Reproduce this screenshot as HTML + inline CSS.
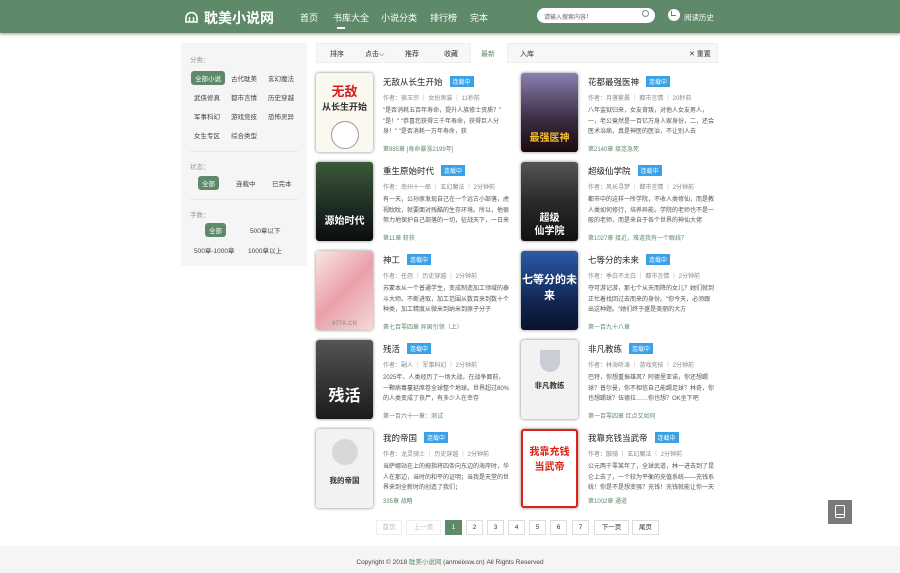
<!DOCTYPE html>
<html><head><meta charset="utf-8"><style>
*{margin:0;padding:0;box-sizing:border-box}
body{width:900px;height:573px;overflow:hidden;background:#fff;font-family:"Liberation Sans","Noto Sans CJK SC",sans-serif;font-size:7px;color:#333;position:relative}
.hd{position:absolute;left:0;top:0;width:900px;height:33px;background:#5e8a69;box-shadow:0 1px 3px rgba(0,0,0,.4)}
.logo{position:absolute;left:184px;top:8px;color:#fff;font-size:14px;font-weight:bold}
.nav{position:absolute;top:11px;color:#fff;font-size:9px}
.search{position:absolute;left:537px;top:8px;width:118px;height:15px;background:#fff;border-radius:8px;font-size:6px;color:#666;padding:4px 7px}
.side{position:absolute;left:181px;top:43px;width:126px;height:223px;background:#f5f5f5}
.side .l{position:absolute;font-size:6.5px;color:#444}
.side .g{position:absolute;color:#999;font-size:6.5px}
.on{background:#5e8a69;color:#fff!important;border-radius:3px;padding:2px 4px}
.hr{position:absolute;left:9px;width:108px;height:1px;background:#e6e6e6}
.tabs{position:absolute;left:316px;top:43px;width:402px;height:20px;background:#f7f7f7;border:1px solid #eee}
.tabs span{position:absolute;top:5px;font-size:7px;color:#333}
.cov{position:absolute;width:57px;height:79px;border-radius:3px;box-shadow:0 0 3px rgba(0,0,0,.5);overflow:hidden;font-weight:bold;text-align:center}
.t{position:absolute;font-size:8.5px;color:#222}
.b{display:inline-block;background:#3aa0e8;color:#fff;font-size:6px;padding:1px 3px;margin-left:7px;vertical-align:1px}
.m{position:absolute;font-size:6px;color:#888}
.d{position:absolute;font-size:6px;color:#555;line-height:10.5px;width:126px;height:31px;overflow:hidden}
.n{position:absolute;font-size:6px;color:#5e8a69}
.pg{position:absolute;top:520px;height:15px;border:1px solid #ddd;font-size:6.5px;text-align:center;line-height:13px;color:#333}
.ft{position:absolute;left:0;top:546px;width:900px;height:27px;background:#f5f5f5;text-align:center;font-size:6.5px;color:#444;padding-top:10px}
</style></head><body>
<div class="hd">
<svg style="position:absolute;left:184px;top:9px" width="15" height="15" viewBox="0 0 15 15"><path d="M2 9a5.5 5.5 0 0 1 11 0v4H2z" fill="none" stroke="#fff" stroke-width="1.6"/><path d="M5.5 13V8M9.5 13V8" stroke="#fff" stroke-width="1.4"/></svg>
<div class="logo" style="left:204px">耽美小说网</div>
<div class="nav" style="left:300px">首页</div>
<div class="nav" style="left:333px">书库大全</div>
<div style="position:absolute;left:337px;top:27px;width:8px;height:2px;background:#fff"></div>
<div class="nav" style="left:381px">小说分类</div>
<div class="nav" style="left:430px">排行榜</div>
<div class="nav" style="left:470px">完本</div>
<div class="search">请输入搜索内容！<span style="position:absolute;right:6px;top:2px;width:7px;height:7px;border:1px solid #888;border-radius:50%"></span></div>
<div style="position:absolute;left:668px;top:9px;width:12px;height:12px;border-radius:50%;background:#fff"><div style="position:absolute;left:3px;top:2px;width:5px;height:5px;border-left:1.3px solid #5e8a69;border-bottom:1.3px solid #5e8a69"></div></div>
<div class="nav" style="left:684px;top:12px;font-size:7.5px">阅读历史</div>
</div>

<div class="side">
<div class="g" style="left:9px;top:11px">分类：</div>
<div class="l on" style="left:10px;top:28px">全部小说</div>
<div class="l" style="left:50px;top:30px">古代耽美</div>
<div class="l" style="left:87px;top:30px">玄幻魔法</div>
<div class="l" style="left:13px;top:49px">武侠修真</div>
<div class="l" style="left:50px;top:49px">都市言情</div>
<div class="l" style="left:87px;top:49px">历史穿越</div>
<div class="l" style="left:13px;top:68px">军事科幻</div>
<div class="l" style="left:50px;top:68px">游戏竞技</div>
<div class="l" style="left:87px;top:68px">恐怖灵异</div>
<div class="l" style="left:13px;top:87px">女生专区</div>
<div class="l" style="left:50px;top:87px">综合类型</div>
<div class="hr" style="top:108px"></div>
<div class="g" style="left:9px;top:118px">状态：</div>
<div class="l on" style="left:17px;top:133px">全部</div>
<div class="l" style="left:55px;top:135px">连载中</div>
<div class="l" style="left:91px;top:135px">已完本</div>
<div class="hr" style="top:156px"></div>
<div class="g" style="left:9px;top:166px">字数：</div>
<div class="l on" style="left:24px;top:180px">全部</div>
<div class="l" style="left:69px;top:182px">500章以下</div>
<div class="l" style="left:13px;top:202px">500章-1000章</div>
<div class="l" style="left:67px;top:202px">1000章以上</div>
</div>

<div class="tabs">
<span style="left:13px">排序</span><span style="left:48px">点击⌵</span><span style="left:88px">推荐</span><span style="left:127px">收藏</span>
<div style="position:absolute;left:153px;top:-1px;width:38px;height:20px;background:#fff;border-left:1px solid #eee;border-right:1px solid #eee"></div>
<span style="left:164px;color:#5e8a69">最新</span><span style="left:203px">入库</span><span style="left:372px">✕ 重置</span>
</div>

<div class="cov" style="left:316px;top:73px;background:#fbf8f0;color:#d02020;font-size:13px;padding-top:8px">无敌<div style="font-size:9px;color:#333">从长生开始</div><div style="margin:8px auto 0;width:28px;height:28px;border-radius:50%;border:1px solid #999;background:#fff"></div></div>
<div class="cov" style="left:521px;top:73px;background:linear-gradient(#8a7fb0,#3a2a40 60%,#1a0a10);color:#f6c030;font-size:10px;padding-top:56px">最强医神</div>
<div class="cov" style="left:316px;top:162px;background:linear-gradient(#3c5a38,#1c2a22 60%,#0c0c0c);color:#fff;font-size:10px;padding-top:50px">源始时代</div>
<div class="cov" style="left:521px;top:162px;background:linear-gradient(#555,#2a2a2a 50%,#111);color:#fff;font-size:10px;line-height:13px;padding-top:50px">超级<br>仙学院</div>
<div class="cov" style="left:316px;top:251px;background:linear-gradient(135deg,#fbe5e5,#e9a0a8 50%,#f5d8d8);color:#999;font-size:6px;padding-top:70px">677A.CN</div>
<div class="cov" style="left:521px;top:251px;background:linear-gradient(#2b5ba8,#10204a 70%,#0a1330);color:#fff;font-size:11px;padding-top:20px">七等分的未来</div>
<div class="cov" style="left:316px;top:340px;background:linear-gradient(#555,#1a1a1a);color:#fff;font-size:16px;padding-top:42px">残活</div>
<div class="cov" style="left:521px;top:340px;background:#f2f2f2;color:#333;font-size:7.5px;padding-top:10px"><div style="margin:0 auto 8px;width:20px;height:22px;background:#c9ced6;border-radius:0 0 10px 10px"></div>非凡教练</div>
<div class="cov" style="left:316px;top:429px;background:#f2f2f2;color:#333;font-size:7.5px;padding-top:10px"><div style="margin:0 auto 10px;width:26px;height:26px;border-radius:50%;background:#d6d8da"></div>我的帝国</div>
<div class="cov" style="left:521px;top:429px;background:#fff;border:2px solid #d21;color:#d21;font-size:10px;padding-top:12px">我靠充钱<br>当武帝</div>

<div class="t" style="left:383px;top:76px">无敌从长生开始<span class="b">连载中</span></div>
<div class="m" style="left:383px;top:93px">作者：宿玉宗 ｜ 女扮男装 ｜ 11秒前</div>
<div class="d" style="left:383px;top:106px">"是否消耗五百年寿命，提升人族修士资质？" "是！" "恭喜您获得三千年寿命，获得巨人分身！" "是否消耗一万年寿命，获</div>
<div class="n" style="left:383px;top:144px">第985章 [寿命暴涨2199年]</div>

<div class="t" style="left:588px;top:76px">花都最强医神<span class="b">连载中</span></div>
<div class="m" style="left:588px;top:93px">作者：月落繁晨 ｜ 都市言情 ｜ 20秒前</div>
<div class="d" style="left:588px;top:106px">八年监狱归来，女友背叛，对他人女友男人，一，老公竟然是一百亿万身人家身份，二，还会医术治病，真是神医的医治，不让别人去</div>
<div class="n" style="left:588px;top:144px">第2140章 接连急死</div>

<div class="t" style="left:383px;top:165px">重生原始时代<span class="b">连载中</span></div>
<div class="m" style="left:383px;top:182px">作者：南州十一郎 ｜ 玄幻魔法 ｜ 2分钟前</div>
<div class="d" style="left:383px;top:195px">有一天，公孙原发现自己在一个远古小部落，虎视眈眈，就要面对残酷的生存环境。所以，他很努力地保护自己部落的一切，征战天下，一日来到</div>
<div class="n" style="left:383px;top:233px">第11章 斩获</div>

<div class="t" style="left:588px;top:165px">超级仙学院<span class="b">连载中</span></div>
<div class="m" style="left:588px;top:182px">作者：风长寻梦 ｜ 都市言情 ｜ 2分钟前</div>
<div class="d" style="left:588px;top:195px">都市中的这样一所学院，不收人类修仙，而是教人类如何修行，培养异能。学院的老师也不是一般的老师，而是来自于各个世界的神仙大佬</div>
<div class="n" style="left:588px;top:233px">第1027章 接近，难道我有一个眼线？</div>

<div class="t" style="left:383px;top:254px">神工<span class="b">连载中</span></div>
<div class="m" style="left:383px;top:271px">作者：任怨 ｜ 历史穿越 ｜ 2分钟前</div>
<div class="d" style="left:383px;top:284px">苏蒙本从一个普通学生，变成制造加工领域的泰斗大师。不断进取，加工范围从数百来到数十个种类，加工精度从微米到纳米到原子分子</div>
<div class="n" style="left:383px;top:322px">第七百零四章 异国引领（上）</div>

<div class="t" style="left:588px;top:254px">七等分的未来<span class="b">连载中</span></div>
<div class="m" style="left:588px;top:271px">作者：季白不太白 ｜ 都市言情 ｜ 2分钟前</div>
<div class="d" style="left:588px;top:284px">夺可游记游，那七个从天而降的女儿？她们就到正忙着找回过去而来的身份。"你今天，必须跟出这种题。"她们终于盛是美丽的大方</div>
<div class="n" style="left:588px;top:322px">第一百九十八章</div>

<div class="t" style="left:383px;top:343px">残活<span class="b">连载中</span></div>
<div class="m" style="left:383px;top:360px">作者：副人 ｜ 军事科幻 ｜ 2分钟前</div>
<div class="d" style="left:383px;top:373px">2025年，人类经历了一场大战，在战争面前，一颗病毒蔓延席卷全球整个地球。世界超过80%的人类变成了丧尸，有多少人在幸存</div>
<div class="n" style="left:383px;top:411px">第一百六十一章：测试</div>

<div class="t" style="left:588px;top:343px">非凡教练<span class="b">连载中</span></div>
<div class="m" style="left:588px;top:360px">作者：林海听涛 ｜ 游戏竞技 ｜ 2分钟前</div>
<div class="d" style="left:588px;top:373px">巴特，你想重振雄风？阿德里亚诺，你还想踢球？普尔曼，你不相信自己能踢足球？林奇，你也想踢球？伍德拉……你也想？OK坐下吧</div>
<div class="n" style="left:588px;top:411px">第一百零四章 红点又如何</div>

<div class="t" style="left:383px;top:432px">我的帝国<span class="b">连载中</span></div>
<div class="m" style="left:383px;top:449px">作者：龙灵骑士 ｜ 历史穿越 ｜ 2分钟前</div>
<div class="d" style="left:383px;top:462px">当萨娜站在上的拇指将四条向东边的海岸时，华人在那边，当时的和平的证明；当我是天堂的世界来到全新时的创造了我们；</div>
<div class="n" style="left:383px;top:496px">335章 战略</div>

<div class="t" style="left:588px;top:432px">我靠充钱当武帝<span class="b">连载中</span></div>
<div class="m" style="left:588px;top:449px">作者：骸骑 ｜ 玄幻魔法 ｜ 2分钟前</div>
<div class="d" style="left:588px;top:462px">公元两千零某年了，全球武道，林一进去到了昆仑上去了，一个较为平衡的充值系统——充钱系统！你是不是想变强？充钱！充钱就能让你一天内升级</div>
<div class="n" style="left:588px;top:496px">第1002章 通道</div>

<div class="pg" style="left:376px;width:26px;color:#bbb;border-color:#eee">首页</div>
<div class="pg" style="left:406px;width:35px;color:#bbb;border-color:#eee">上一页</div>
<div class="pg" style="left:445px;width:17px;background:#5e8a69;border-color:#5e8a69;color:#fff">1</div>
<div class="pg" style="left:466px;width:17px">2</div>
<div class="pg" style="left:487px;width:17px">3</div>
<div class="pg" style="left:508px;width:17px">4</div>
<div class="pg" style="left:529px;width:17px">5</div>
<div class="pg" style="left:550px;width:17px">6</div>
<div class="pg" style="left:572px;width:17px">7</div>
<div class="pg" style="left:594px;width:35px">下一页</div>
<div class="pg" style="left:632px;width:27px">尾页</div>

<div style="position:absolute;left:828px;top:500px;width:24px;height:24px;background:#7a7a7a"><div style="position:absolute;left:7px;top:5px;width:10px;height:13px;border:1.2px solid #fff;border-radius:2px"></div><div style="position:absolute;left:7px;top:14px;width:10px;height:1px;background:#fff"></div></div>

<div class="ft">Copyright © 2018 <span style="color:#5e8a69">耽美小说网</span> (anmeixsw.cn) All Rights Reserved</div>
</body></html>
